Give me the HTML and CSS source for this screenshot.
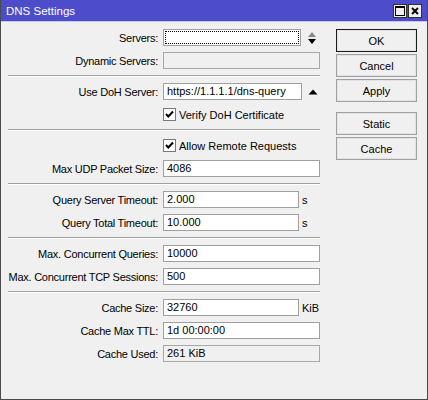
FILE: index.html
```html
<!DOCTYPE html>
<html>
<head>
<meta charset="utf-8">
<link rel="stylesheet" href="styles.css">
</head>
<body>
<div class="window">
  <div class="titlebar">
    <span class="title">DNS Settings</span>
    <div class="tbtns">
      <span class="tbtn"><svg width="12" height="12" viewBox="0 0 12 12"><rect x="1.5" y="1.5" width="9" height="9" fill="none" stroke="#000" stroke-width="1"/><rect x="1" y="1" width="10" height="2" fill="#000"/></svg></span>
      <span class="tbtn"><svg width="12" height="12" viewBox="0 0 12 12"><path d="M3 3 L9 9 M9 3 L3 9" stroke="#000" stroke-width="2" fill="none"/></svg></span>
    </div>
  </div>
  <div class="content">
    <div class="form">
      <div class="row">
        <span class="label">Servers:</span>
        <div class="input focus w138"></div>
        <svg class="spin" width="10" height="14" viewBox="0 0 10 14"><path d="M5 1 L9 6 L1 6 Z" fill="#8a8a8a"/><path d="M1 8 L9 8 L5 13 Z" fill="#000"/></svg>
      </div>
      <div class="row">
        <span class="label">Dynamic Servers:</span>
        <div class="input disabled w157"></div>
      </div>
      <div class="sep"></div>
      <div class="row">
        <span class="label">Use DoH Server:</span>
        <div class="input w139">https://1.1.1.1/dns-query</div>
        <svg class="uparrow" width="10" height="6" viewBox="0 0 10 6"><path d="M5 0.5 L9.5 5.5 L0.5 5.5 Z" fill="#000"/></svg>
      </div>
      <div class="row">
        <label class="check"><span class="cbox"><svg width="11" height="11" viewBox="0 0 11 11"><path d="M2 5 L4.3 7.5 L9 2.5" stroke="#000" stroke-width="2" fill="none"/></svg></span>Verify DoH Certificate</label>
      </div>
      <div class="sep"></div>
      <div class="row">
        <label class="check"><span class="cbox"><svg width="11" height="11" viewBox="0 0 11 11"><path d="M2 5 L4.3 7.5 L9 2.5" stroke="#000" stroke-width="2" fill="none"/></svg></span>Allow Remote Requests</label>
      </div>
      <div class="row">
        <span class="label">Max UDP Packet Size:</span>
        <div class="input w157">4086</div>
      </div>
      <div class="sep"></div>
      <div class="row">
        <span class="label">Query Server Timeout:</span>
        <div class="input w136">2.000</div>
        <span class="unit">s</span>
      </div>
      <div class="row">
        <span class="label">Query Total Timeout:</span>
        <div class="input w136">10.000</div>
        <span class="unit">s</span>
      </div>
      <div class="sep"></div>
      <div class="row">
        <span class="label">Max. Concurrent Queries:</span>
        <div class="input w157">10000</div>
      </div>
      <div class="row">
        <span class="label">Max. Concurrent TCP Sessions:</span>
        <div class="input w157">500</div>
      </div>
      <div class="sep"></div>
      <div class="row">
        <span class="label">Cache Size:</span>
        <div class="input w136">32760</div>
        <span class="unit">KiB</span>
      </div>
      <div class="row">
        <span class="label">Cache Max TTL:</span>
        <div class="input w157">1d 00:00:00</div>
      </div>
      <div class="row">
        <span class="label">Cache Used:</span>
        <div class="input disabled w157">261 KiB</div>
      </div>
    </div>
    <div class="buttons">
      <div class="btn default">OK</div>
      <div class="btn">Cancel</div>
      <div class="btn">Apply</div>
      <div class="btn gapped">Static</div>
      <div class="btn">Cache</div>
    </div>
  </div>
</div>
</body>
</html>
```

FILE: styles.css
```css
* { box-sizing: border-box; }
body {
  margin: 0;
  font-family: "Liberation Sans", Arial, sans-serif;
  font-size: 11px;
  color: #000;
}
.window {
  width: 428px;
  height: 400px;
  border: 1px solid #4a4a4a;
  border-top: none;
  background: #f0f0f0;
  display: flex;
  flex-direction: column;
}
.titlebar {
  height: 22px;
  background: #4d4dcc;
  display: flex;
  align-items: center;
  justify-content: space-between;
  padding: 0 5px 0 5px;
  border-bottom: 1px solid #c8c8e8;
  color: #fff;
}
.title {
  font-size: 11.5px;
  padding-top: 1px;
}
.tbtns {
  display: flex;
  gap: 1px;
}
.tbtn {
  width: 14px;
  height: 14px;
  background: #f0f0f0;
  border: 1px solid #303030;
  display: flex;
  align-items: center;
  justify-content: center;
}
.tbtn svg { display: block; }
.content {
  display: flex;
  padding: 7px 10px 0 7px;
}
.form {
  width: 312px;
  display: flex;
  flex-direction: column;
  gap: 6px;
}
.row {
  display: flex;
  align-items: center;
  height: 17px;
}
.label {
  width: 150px;
  flex-shrink: 0;
  margin-right: 5px;
  display: flex;
  justify-content: flex-end;
  white-space: nowrap;
  letter-spacing: -0.25px;
}
.input {
  height: 17px;
  border: 1px solid #a0a0a0;
  background: #fff;
  padding: 0 3px;
  line-height: 15px;
  white-space: nowrap;
  overflow: hidden;
}
.input.disabled {
  background: #f0f0f0;
  border-color: #a8a8a8;
}
.input.focus {
  outline: 1px dotted #000;
  outline-offset: -3px;
}
.w157 { width: 157px; }
.w139 { width: 139px; }
.w138 { width: 138px; }
.w136 { width: 136px; }
.unit { margin-left: 3px; }
.spin { margin-left: 6px; display: block; }
.uparrow { margin-left: 6px; display: block; }
.sep {
  height: 2px;
  border-top: 1px solid #a0a0a0;
  border-bottom: 1px solid #ffffff;
}
.check {
  margin-left: 155px;
  display: flex;
  align-items: center;
  gap: 3px;
}
.cbox {
  width: 13px;
  height: 13px;
  border: 1px solid #7a7a7a;
  background: #fff;
  display: flex;
  align-items: center;
  justify-content: center;
}
.cbox svg { display: block; }
.buttons {
  margin-left: 16px;
  width: 81px;
  display: flex;
  flex-direction: column;
  gap: 2px;
}
.btn {
  height: 23px;
  border: 1px solid #a0a0a0;
  background: #f0f0f0;
  box-shadow: inset 0 0 0 1px #e3e3e3;
  display: flex;
  align-items: center;
  justify-content: center;
}
.btn.default { border-color: #1a1a1a; }
.btn.gapped { margin-top: 8px; }
```
